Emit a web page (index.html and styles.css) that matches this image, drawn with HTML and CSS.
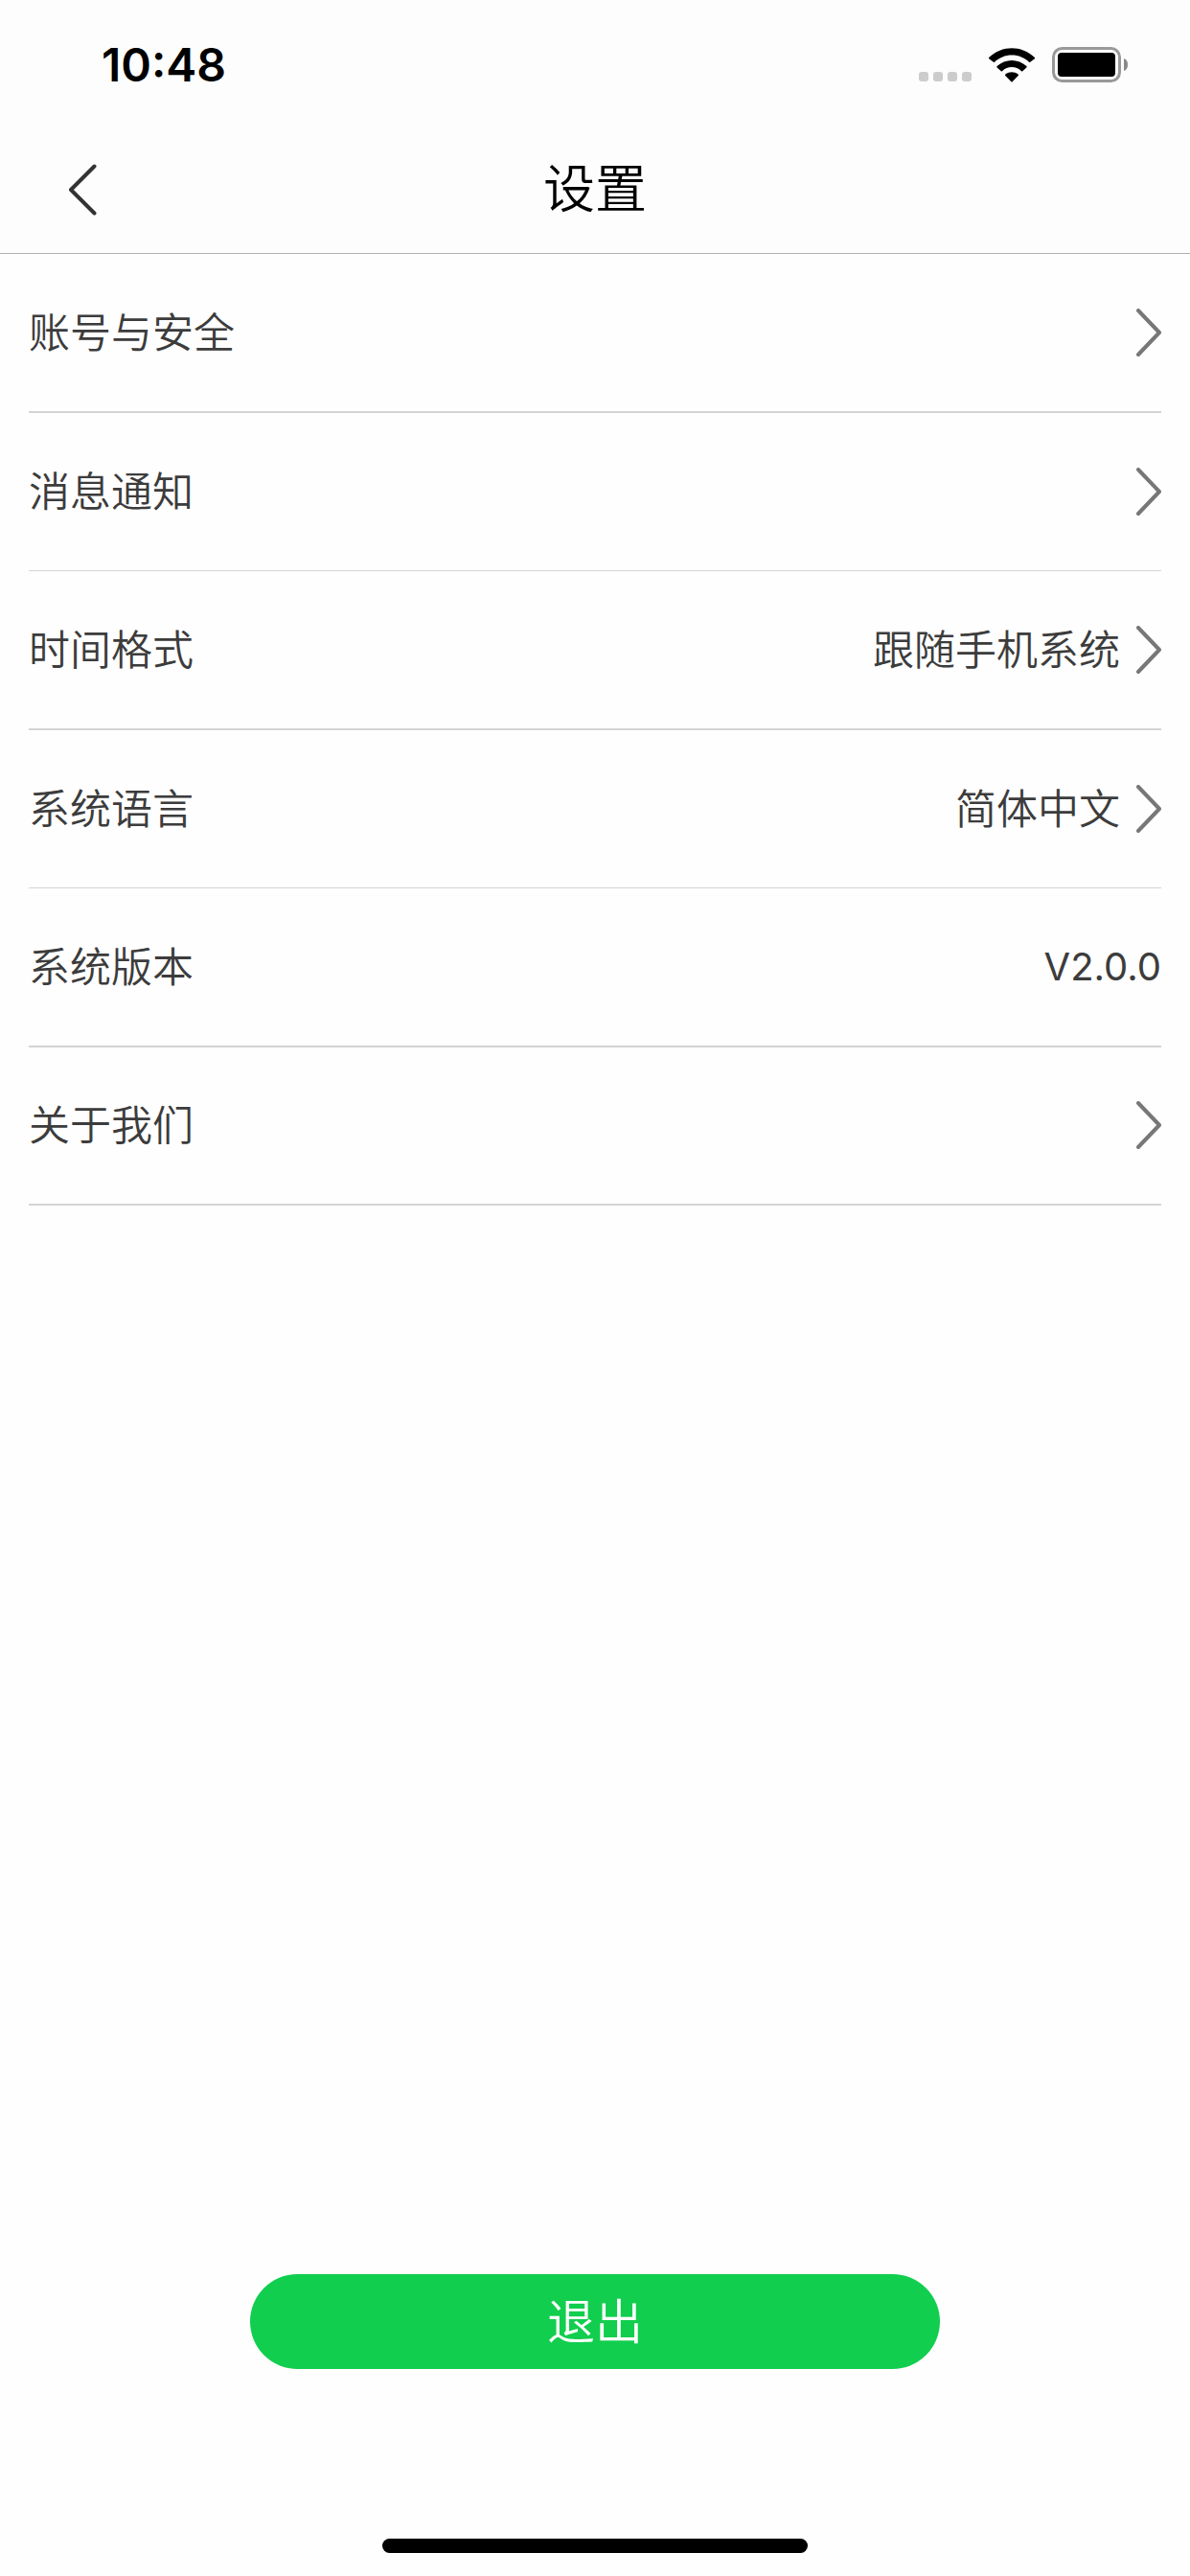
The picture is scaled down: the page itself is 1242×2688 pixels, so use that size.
FILE: index.html
```html
<!DOCTYPE html>
<html lang="zh-CN">
<head>
<meta charset="utf-8">
<meta name="viewport" content="width=device-width, initial-scale=1">
<title>设置</title>
<link rel="stylesheet" href="styles.css">
</head>
<body>
<div class="screen">
  <div class="status">
    <time class="clock">10:48</time>
    <div class="indicators">
      <svg class="cell" viewBox="0 0 55 10" aria-hidden="true"><rect width="10" height="10" rx="3"/><rect x="15" width="10" height="10" rx="3"/><rect x="30" width="10" height="10" rx="3"/><rect x="45" width="10" height="10" rx="3"/></svg>
      <svg class="wifi" viewBox="0 0 50 36" aria-hidden="true"><path d="M25 7.500c7 0 13.300 2.700 18 7.200.4.300.9.300 1.200 0l4.700-3.500c.4-.4.400-1 0-1.300C35 -3 15 -3 1.200 9.900c-.4.300-.4.900 0 1.300l4.700 3.500c.3.300.8.300 1.200 0 4.800-4.500 11.100-7.200 17.900-7.200z"/><path d="M25 20c3.800 0 7.200 1.400 10 4.200.4.300.9.300 1.200 0l4.200-3.800c.4-.4.400-1 0-1.300-8.800-8-22-8-30.800 0-.4.300-.4.900 0 1.300l4.200 3.800c.3.300.8.300 1.200 0C17.800 21.400 21.200 20 25 20z"/><path d="M31.700 28.900c.4-.4.400-1 0-1.300-4-3-9.400-3-13.400 0-.4.300-.4.900 0 1.300l6.100 6.300c.3.300.9.300 1.200 0z"/></svg>
      <svg class="battery" viewBox="0 0 79 37" aria-hidden="true"><rect class="shell" x="1.500" y="1.500" width="69" height="34" rx="9"/><rect x="6" y="6" width="60" height="25" rx="4"/><path class="tip" d="M75 12v13c3-1 4-3.500 4-6.500s-1-5.500-4-6.500z"/></svg>
    </div>
  </div>
  <header class="bar">
    <button class="back" type="button" aria-label="返回"><svg viewBox="0 0 30 54" aria-hidden="true"><path d="M27.500 2.500 3 27l24.500 24.500"/></svg></button>
    <h1 class="title">设置</h1>
  </header>
  <main class="content">
    <ul class="list">
      <li class="item"><a class="row" href="#account"><span>账号与安全</span><svg class="chevron" viewBox="0 0 26 50" aria-hidden="true"><path d="m2 2 22 23L2 48"/></svg></a></li>
      <li class="item"><a class="row" href="#notice"><span>消息通知</span><svg class="chevron" viewBox="0 0 26 50" aria-hidden="true"><path d="m2 2 22 23L2 48"/></svg></a></li>
      <li class="item"><a class="row" href="#time"><span>时间格式</span><span class="value">跟随手机系统</span><svg class="chevron" viewBox="0 0 26 50" aria-hidden="true"><path d="m2 2 22 23L2 48"/></svg></a></li>
      <li class="item"><a class="row" href="#language"><span>系统语言</span><span class="value">简体中文</span><svg class="chevron" viewBox="0 0 26 50" aria-hidden="true"><path d="m2 2 22 23L2 48"/></svg></a></li>
      <li class="item"><div class="row"><span>系统版本</span><span class="value version">V2.0.0</span></div></li>
      <li class="item"><a class="row" href="#about"><span>关于我们</span><svg class="chevron" viewBox="0 0 26 50" aria-hidden="true"><path d="m2 2 22 23L2 48"/></svg></a></li>
    </ul>
  </main>
  <footer class="footer">
    <button class="logout" type="button">退出</button>
    <div class="home"></div>
  </footer>
</div>
</body>
</html>
```
FILE: styles.css
```css
* { box-sizing: border-box; }
body { margin: 0; background: #fefefe; color: #3c3c3c; font-family: Inter, "Noto Sans CJK SC", sans-serif; font-size: 43px; line-height: 48px; }
svg { display: block; flex: none; stroke-linecap: round; stroke-linejoin: round; }
.screen { min-height: 100vh; display: flex; flex-direction: column; }
.status { height: 132px; padding: 3px 65px 0 106px; display: flex; align-items: center; justify-content: space-between; background: #fdfdfd; color: #000; }
.clock { font-size: 48px; font-weight: 600; }
.indicators { display: flex; align-items: center; gap: 17px; }
.cell { width: 55px; height: 10px; margin-top: 25px; fill: #ccc; }
.wifi { width: 50px; height: 36px; }
.battery { width: 79px; height: 37px; }
.shell { fill: none; stroke: #999; stroke-width: 3; }
.tip { fill: #888; }
.bar { height: 133px; padding: 0 71px; display: grid; grid-template-columns: 1fr auto 1fr; align-items: center; background: #fdfdfd; border-bottom: 1px solid #b2b2b2; }
.back { justify-self: start; padding: 0; border: 0; background: none; }
.back svg { width: 30px; height: 54px; fill: none; stroke: #333; stroke-width: 4; }
.title { margin: 0; font-size: 54px; font-weight: 350; line-height: 64px; color: #000; }
.content { flex: 1; }
.list { display: grid; grid-auto-rows: 1fr; min-height: 993px; list-style: none; margin: 0; padding: 0 30px; }
.item { display: grid; border-bottom: 2px solid #d4d4d4; }
.item:nth-child(2), .item:nth-child(4) { border-bottom-width: 1px; }
.row { display: flex; align-items: center; gap: 17px; color: inherit; text-decoration: none; font-weight: 350; }
.value { margin-left: auto; }
.version { font-size: 40px; font-weight: 400; }
.chevron { width: 26px; height: 50px; margin-left: auto; fill: none; stroke: #777; stroke-width: 4; }
.value + .chevron { margin-left: 0; }
.footer { display: flex; flex-direction: column; align-items: center; gap: 177px; padding-bottom: 24px; }
.logout { width: 58%; height: 99px; padding: 0; border: 0; border-radius: 50px; background: #11ce4e; color: #fff; font: inherit; font-size: 50px; font-weight: 350; }
.home { width: 444px; height: 15px; border-radius: 8px; background: #000; }
```
